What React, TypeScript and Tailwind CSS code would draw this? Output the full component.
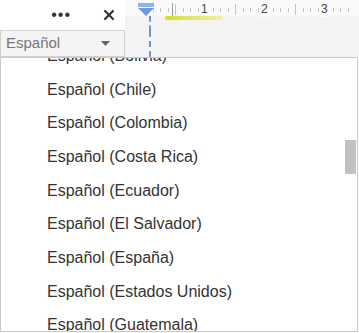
import { X } from 'lucide-react';

const countries = [
  'Bolivia',
  'Chile',
  'Colombia',
  'Costa Rica',
  'Ecuador',
  'El Salvador',
  'España',
  'Estados Unidos',
  'Guatemala',
  'Honduras',
];

function Ruler() {
  // ticks every ~7.5px, numbers every 60px
  const ticks = Array.from({ length: 28 }, (_, i) => i);
  return (
    <div className="relative h-[20px] flex-1 bg-[#fafafa]">
      {ticks.map((i) => {
        const x = 20 + i * 7.5;
        const major = i % 8 === 4;
        return (
          <div
            key={i}
            className="absolute w-px bg-[#c4c4c4]"
            style={{ left: x, top: major ? 4 : 8, height: major ? 11 : 4 }}
          />
        );
      })}
      <div className="absolute left-[47px] top-[3px] h-[13px] w-px bg-[#9a9a9a]" />
      <span className="absolute left-[74px] top-[2px] bg-[#fafafa] px-[2px] text-[12px] leading-[15px] text-[#444]">1</span>
      <span className="absolute left-[134px] top-[2px] bg-[#fafafa] px-[2px] text-[12px] leading-[15px] text-[#444]">2</span>
      <span className="absolute left-[194px] top-[2px] bg-[#fafafa] px-[2px] text-[12px] leading-[15px] text-[#444]">3</span>
      {/* indent marker */}
      <svg className="absolute left-[13px] top-[3px]" width="16" height="13" viewBox="0 0 16 13">
        <rect x="0" y="0" width="16" height="4" fill="#8fb3e8" />
        <path d="M0 5 H16 L8 13 Z" fill="#6b9be0" />
      </svg>
    </div>
  );
}

export default function App() {
  return (
    <div
      className="flex h-[333px] w-[359px] flex-col overflow-hidden bg-white"
      style={{ fontFamily: '"Liberation Sans", Arial, sans-serif' }}
    >
      {/* top toolbar */}
      <div className="flex h-[31px]">
        <div className="flex w-[125px] items-center justify-end gap-[30px] border-b border-[#d6d6d6] bg-white pr-[8px]">
          <span className="text-[16px] leading-none tracking-[1px] text-[#333]">•••</span>
          <X size={16} strokeWidth={3.2} color="#333" />
        </div>
        <div className="flex flex-1 flex-col bg-[#f3f3f3]">
          <Ruler />
          <div className="relative flex-1">
            <div className="absolute left-[40px] top-0 h-[4px] w-[58px] rounded-full bg-gradient-to-r from-[#d4e000] to-[#eef2a0]" />
            <div className="absolute left-[24px] top-0 h-full w-0 border-l-2 border-dashed border-[#6e97c9]" />
          </div>
        </div>
      </div>

      {/* language select */}
      <div className="flex h-[26px]">
        <div className="flex w-[125px] items-center justify-between border border-t-0 border-[#d0d0d0] bg-[#f4f4f4] pl-[5px] pr-[14px]">
          <span className="text-[15px] text-[#777]">Español</span>
          <svg width="9" height="5" viewBox="0 0 9 5">
            <path d="M0 0 H9 L4.5 5 Z" fill="#666" />
          </svg>
        </div>
        <div className="relative flex-1 bg-[#f3f3f3]">
          <div className="absolute left-[24px] top-0 h-full w-0 border-l-2 border-dashed border-[#6e97c9]" />
        </div>
      </div>

      {/* dropdown list */}
      <div className="relative h-[275px] w-[358px] overflow-hidden border border-[#c9c9c9] bg-white">
        <div className="-mt-[19px] flex flex-col">
          {countries.map((c) => (
            <div key={c} className="flex h-[33.7px] items-center pl-[46px] text-[16px] text-[#333]">
              Español ({c})
            </div>
          ))}
        </div>
        <div className="absolute right-[1px] top-[82px] h-[34px] w-[11px] bg-[#c1c1c1]" />
      </div>
    </div>
  );
}
